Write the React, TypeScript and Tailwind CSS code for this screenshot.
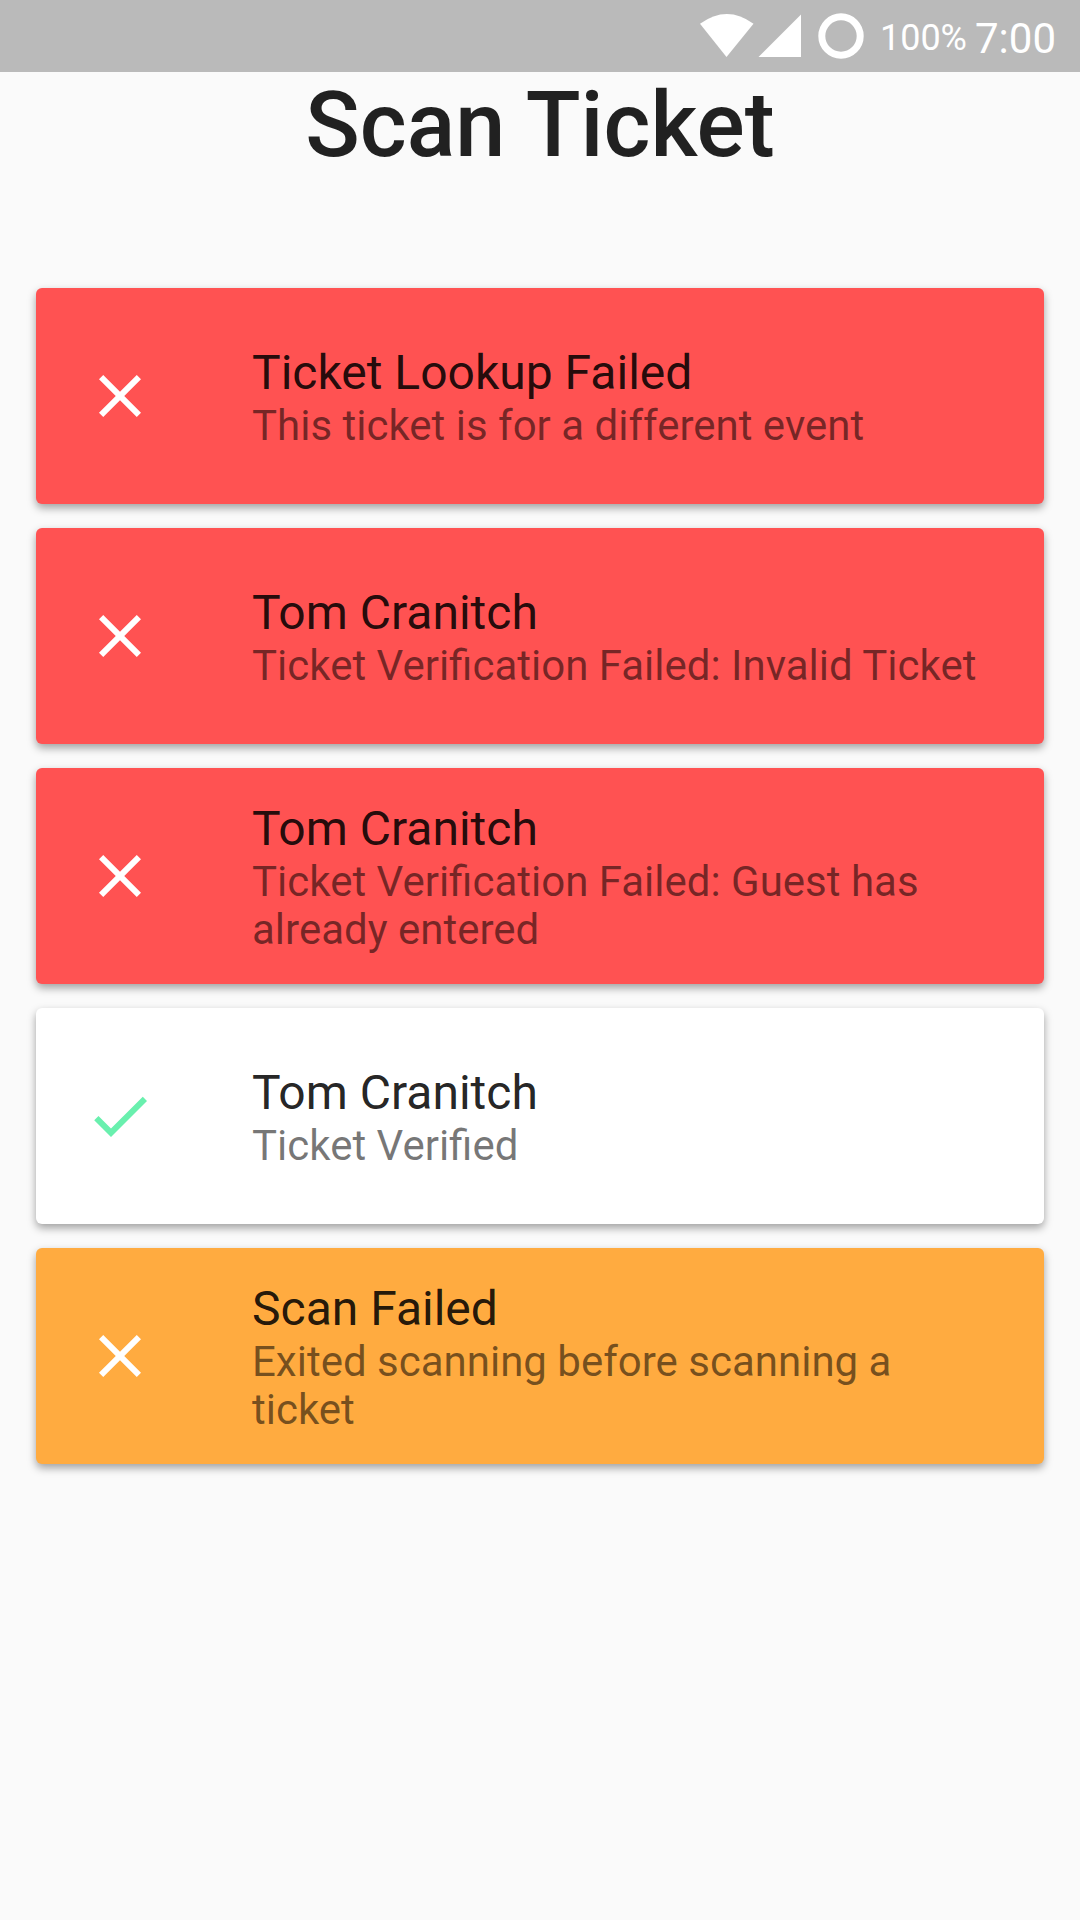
type Entry = { tone: "error" | "warn" | "ok"; title: string; detail: string };

const entries: Entry[] = [
  { tone: "error", title: "Ticket Lookup Failed", detail: "This ticket is for a different event" },
  { tone: "error", title: "Tom Cranitch", detail: "Ticket Verification Failed: Invalid Ticket" },
  { tone: "error", title: "Tom Cranitch", detail: "Ticket Verification Failed: Guest has already entered" },
  { tone: "ok", title: "Tom Cranitch", detail: "Ticket Verified" },
  { tone: "warn", title: "Scan Failed", detail: "Exited scanning before scanning a ticket" },
];

const tones = {
  error: "bg-[#ff5252]",
  warn: "bg-[#ffab40]",
  ok: "bg-white",
};

function StatusIcon({ ok }: { ok: boolean }) {
  return (
    <svg viewBox="0 0 24 24" aria-hidden="true" className={ok ? "size-[72px] shrink-0 fill-[#69f0ae]" : "size-[72px] shrink-0 fill-white"}>
      {ok ? (
        <path d="M9 16.17L4.83 12l-1.42 1.41L9 19 21 7l-1.41-1.41z" />
      ) : (
        <path d="M19 6.41L17.59 5 12 10.59 6.41 5 5 6.41 10.59 12 5 17.59 6.41 19 12 13.41 17.59 19 19 17.59 13.41 12z" />
      )}
    </svg>
  );
}

function Card({ entry }: { entry: Entry }) {
  return (
    <li className={`flex min-h-[216px] items-center rounded-md px-12 shadow-[0_4px_8px_rgba(0,0,0,0.36)] ${tones[entry.tone]}`}>
      <StatusIcon ok={entry.tone === "ok"} />
      <div className="ml-24 flex-1 pt-0.5">
        <h2 className="text-[48px] leading-[58px] text-black/87">{entry.title}</h2>
        <p className="text-[42px] leading-[48px] text-black/54">{entry.detail}</p>
      </div>
    </li>
  );
}

function StatusBar() {
  return (
    <header className="flex h-[72px] items-center justify-end bg-[#bababa] pt-1 pr-6 text-white">
      <svg viewBox="0 0 164 52" aria-hidden="true" className="mr-4 h-[52px] w-[164px] fill-white">
        <path d="M0 11.7Q27-7.7 53.500 11.7L26.500 45z" />
        <path d="M101 2.500V45H58.500z" />
        <circle cx="141" cy="24" r="19.200" fill="none" stroke="white" strokeWidth="7" />
      </svg>
      <span className="text-[36px]">100%</span>
      <span className="ml-2 text-[42px]">7:00</span>
    </header>
  );
}

export default function App() {
  return (
    <div className="min-h-screen bg-[#fafafa] font-[Roboto,sans-serif]">
      <StatusBar />
      <main className="px-9">
        <h1 className="text-center text-[90px] leading-[108px] font-medium text-black/87">Scan Ticket</h1>
        <ul className="mt-[108px] flex flex-col gap-6">
          {entries.map((entry, i) => (
            <Card key={i} entry={entry} />
          ))}
        </ul>
      </main>
    </div>
  );
}
